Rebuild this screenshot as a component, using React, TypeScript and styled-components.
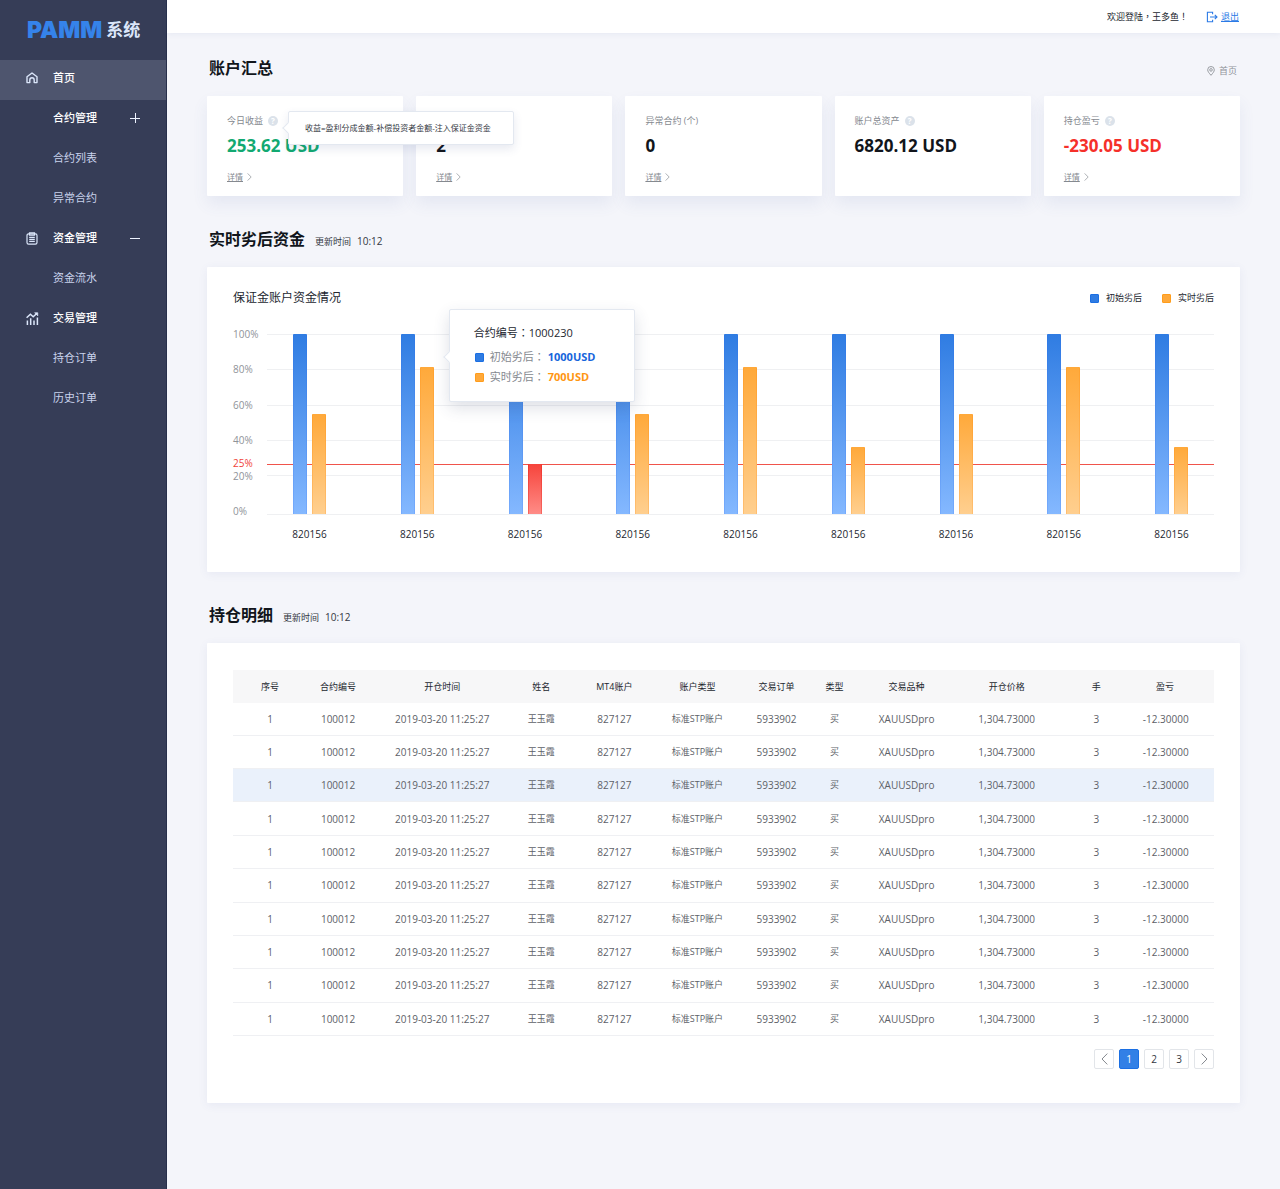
import React from "react";
import styled, { createGlobalStyle, css } from "styled-components";

const GlobalStyle = createGlobalStyle`
  *, *::before, *::after { box-sizing: border-box; }
  body {
    margin: 0;
    background: #f4f5fa;
    color: #23272f;
    font-family: "Open Sans", "Noto Sans", "Noto Sans CJK SC", sans-serif;
    font-size: 9px;
    line-height: 14px;
  }
  h1, h2, h3, p, ul, dl, dd, dt { margin: 0; padding: 0; }
  ul { list-style: none; }
  button { font: inherit; color: inherit; border: 0; background: none; padding: 0; cursor: pointer; }
  svg { display: block; flex: none; }
`;

/* ---------- shell ---------- */

const Shell = styled.div`
  display: grid;
  grid-template-columns: 167px minmax(0, 1fr);
  min-height: 100vh;
`;

const Sidebar = styled.aside`
  background: #363d57;
  border-right: 1px solid #272f4b;
`;

const Logo = styled.div`
  display: flex;
  align-items: center;
  gap: 4px;
  height: 60px;
  padding-left: 27px;
  color: #dbe6fa;
  font-size: 17px;
  font-weight: 700;
  line-height: 24px;
`;

const LogoMark = styled.span`
  color: #3583ea;
  font-family: Inter, "Liberation Sans", sans-serif;
  font-size: 23px;
  font-weight: 900;
`;

const menuRow = css`
  display: grid;
  grid-template-columns: 27px 1fr auto;
  align-items: center;
  width: 100%;
  height: 40px;
  padding: 0 26px 4px;
  font-size: 11px;
  line-height: 16px;
  text-align: left;
  text-decoration: none;
`;

const MenuLink = styled.a<{ $active?: boolean; $child?: boolean }>`
  ${menuRow}
  color: ${(p) => (p.$child ? "#c9d3ec" : "#ffffff")};
  font-weight: ${(p) => (p.$child ? 400 : 500)};
  background: ${(p) => (p.$active ? "#4e556e" : "transparent")};
`;

const MenuButton = styled.button`
  ${menuRow}
  color: #ffffff;
  font-size: 11px;
  line-height: 16px;
  font-weight: 500;
`;

const MenuText = styled.span`
  grid-column: 2;
`;

const Content = styled.div`
  min-width: 0;
`;

const TopBar = styled.header`
  display: flex;
  justify-content: flex-end;
  align-items: center;
  gap: 18px;
  height: 33px;
  padding: 0 41px;
  background: #ffffff;
  box-shadow: 0 1px 6px rgba(70, 85, 150, 0.08);
`;

const Logout = styled.a`
  display: flex;
  align-items: center;
  gap: 3px;
  color: #2b7ae6;
  text-underline-offset: 1px;
`;

const Main = styled.main`
  display: flex;
  flex-direction: column;
  gap: 31px;
  padding: 23px 40px 60px;
`;

const TitleRow = styled.div`
  display: flex;
  align-items: baseline;
  gap: 10px;
  padding: 0 3px 0 2px;
  margin-bottom: 16px;
`;

const Title = styled.h2`
  color: #11151b;
  font-size: 16px;
  font-weight: 700;
  line-height: 24px;
`;

const Crumb = styled.a`
  display: flex;
  align-items: center;
  align-self: flex-end;
  gap: 4px;
  margin-left: auto;
  color: #8f9399;
  line-height: 18px;
  text-decoration: none;
`;

const Updated = styled.p`
  display: flex;
  align-items: baseline;
  gap: 6px;
  color: #33373f;
`;

const Latin = styled.span`
  font-size: 10px;
`;

/* full-width punctuation centred in its cell */
const Punct = styled.span`
  font-family: "Noto Sans CJK TC", sans-serif;
  line-height: 1;
`;

/* ---------- summary cards ---------- */

const Stats = styled.div`
  display: grid;
  grid-template-columns: repeat(5, minmax(0, 1fr));
  gap: 13px;
`;

const StatCard = styled.article`
  padding: 18px 20px 12px;
  background: #ffffff;
  border-radius: 1px;
  box-shadow: 0 8px 16px rgba(80, 95, 170, 0.09);
`;

const StatLabel = styled.div`
  display: flex;
  align-items: center;
  gap: 5px;
  min-height: 14px;
  color: #85898f;
`;

const Help = styled.div`
  position: relative;
  display: flex;
`;

const HelpButton = styled.button`
  width: 10px;
  height: 10px;
  border-radius: 50%;
  background: #dbe2ea;
  color: #ffffff;
  font-size: 8px;
  font-weight: 700;
  line-height: 10px;
  text-align: center;
`;

const StatValue = styled.p<{ $color?: string }>`
  margin: 6px 0 12px;
  color: ${(p) => p.$color ?? "#11151b"};
  font-size: 17px;
  font-weight: 700;
  line-height: 24px;
`;

const Detail = styled.a`
  display: inline-flex;
  align-items: center;
  gap: 4px;
  color: #85898f;
  font-size: 8px;
  text-underline-offset: 1px;
`;

const bubble = css`
  position: absolute;
  z-index: 2;
  background: #ffffff;
  border: 1px solid #e3e8f0;
  border-radius: 2px;
  white-space: nowrap;

  &::before {
    content: "";
    position: absolute;
    left: -5px;
    width: 8px;
    height: 8px;
    background: #ffffff;
    border: solid #e3e8f0;
    border-width: 0 0 1px 1px;
    transform: rotate(45deg);
  }
`;

const HelpBubble = styled.div`
  ${bubble}
  left: 20px;
  top: -5px;
  padding: 9px 22px 9px 16px;
  color: #33373f;
  font-size: 8px;
  box-shadow: 0 4px 10px rgba(60, 75, 130, 0.12);

  &::before { top: 12px; }
`;

/* ---------- chart ---------- */

const Panel = styled.div`
  padding: 23px 26px 31px;
  background: #ffffff;
  border-radius: 1px;
  box-shadow: 0 2px 10px rgba(80, 95, 170, 0.08);
`;

const ChartHead = styled.div`
  display: flex;
  justify-content: space-between;
  align-items: center;
  margin-bottom: 28px;
`;

const ChartTitle = styled.h3`
  font-size: 12px;
  font-weight: 400;
  line-height: 16px;
`;

const Legend = styled.ul`
  display: flex;
  gap: 20px;
`;

const LegendItem = styled.li`
  display: flex;
  align-items: center;
  gap: 7px;
`;

type Tone = "blue" | "orange" | "red";

const tones: Record<Tone, { top: string; bottom: string; edge: string; side: string }> = {
  blue: { top: "#2f7ce2", bottom: "#84b8ff", edge: "#1b6fe3", side: "rgba(40, 100, 240, 0.15)" },
  orange: { top: "#ffa93a", bottom: "#ffcf8f", edge: "#ff9d1c", side: "rgba(255, 130, 0, 0.2)" },
  red: { top: "#f6443c", bottom: "#ff8c87", edge: "#f0352c", side: "rgba(230, 20, 10, 0.3)" },
};

const Swatch = styled.span<{ $tone: Tone }>`
  width: 9px;
  height: 9px;
  border: 1px solid ${(p) => tones[p.$tone].edge};
  border-radius: 1px;
  background: ${(p) => tones[p.$tone].top};
`;

const Chart = styled.div`
  display: grid;
  grid-template-columns: 34px minmax(0, 1fr);
  grid-template-rows: 181px auto;
  row-gap: 12px;
`;

const YAxis = styled.div`
  position: relative;
  display: flex;
  flex-direction: column;
  justify-content: space-between;
  margin: -6px 0 -2px;
  color: #8f9399;
  font-size: 10px;
  line-height: 12px;
`;

const LimitLabel = styled.span`
  position: absolute;
  left: 0;
  bottom: 48px;
  color: #f0423a;
`;

const Plot = styled.div`
  display: grid;
  grid-template-rows: 100%;
`;

const GridLines = styled.div`
  position: relative;
  grid-area: 1 / 1;
  display: grid;
  grid-template-rows: 35fr 36fr 35fr 35fr 39fr 1px;

  i { border-top: 1px solid #eff0f2; }
`;

const LimitLine = styled.hr`
  position: absolute;
  left: 0;
  right: 0;
  bottom: 50px;
  margin: 0;
  border: 0;
  border-top: 1px solid #f0534b;
`;

const Groups = styled.div`
  grid-area: 1 / 1;
  display: flex;
  justify-content: space-between;
  padding: 0 26px 1px;
`;

const Group = styled.div`
  position: relative;
  display: flex;
  align-items: flex-end;
  justify-content: space-between;
  width: 33px;
`;

const Bar = styled.div<{ $tone: Tone }>`
  width: 14px;
  border-radius: 1px 1px 0 0;
  background: linear-gradient(${(p) => tones[p.$tone].top}, ${(p) => tones[p.$tone].bottom});
  box-shadow: inset 1px 0 ${(p) => tones[p.$tone].side}, inset -1px 0 ${(p) => tones[p.$tone].side};
`;

const XAxis = styled.div`
  grid-column: 2;
  display: flex;
  justify-content: space-between;
  padding: 0 26px;
  font-size: 10px;

  span {
    display: flex;
    justify-content: center;
    width: 33px;
  }
`;

const BarBubble = styled.div`
  ${bubble}
  left: 48px;
  top: -25px;
  padding: 15px 39px 16px 24px;
  font-size: 11px;
  line-height: 16px;
  box-shadow: 0 6px 16px rgba(50, 60, 100, 0.16);

  &::before { top: 43px; }
`;

const BubbleRow = styled.div`
  display: flex;
  align-items: center;
  gap: 3px;
  margin-top: 4px;
  padding-left: 1px;
  color: #85898f;
`;

const BubbleHead = styled.p`
  margin-bottom: 8px;
`;

const BubbleLabel = styled.span`
  display: flex;
  align-items: center;
  gap: 6px;
`;

const BubbleValue = styled.strong<{ $color: string }>`
  color: ${(p) => p.$color};
  font-weight: 700;
`;

/* ---------- table ---------- */

const TablePanel = styled(Panel)`
  padding: 27px 26px 34px;
`;

const Table = styled.table`
  width: 100%;
  height: 366px;
  table-layout: fixed;
  border-collapse: collapse;
  text-align: center;
  white-space: nowrap;

  th, td { padding: 0; }
  th:last-child, td:last-child { padding-right: 27px; }
`;

const Col = styled.col<{ $w: number }>`
  width: ${(p) => p.$w}px;
`;

const HeadCell = styled.th`
  height: 33px;
  background: #f7f7f8;
  font-weight: 400;
`;

const Row = styled.tr<{ $selected: boolean }>`
  background: ${(p) => (p.$selected ? "#eaf1fb" : "transparent")};
`;

const Cell = styled.td<{ $latin: boolean }>`
  border-bottom: 1px solid #eff0f3;
  color: #5d6168;
  font-size: ${(p) => (p.$latin ? 10 : 9)}px;
`;

const Pager = styled.nav`
  display: flex;
  justify-content: flex-end;
  gap: 5px;
  margin-top: 13px;
`;

const PageButton = styled.button<{ $current?: boolean }>`
  display: flex;
  align-items: center;
  justify-content: center;
  width: 20px;
  height: 20px;
  border: 1px solid ${(p) => (p.$current ? "#1b6fe3" : "#e2e5e9")};
  border-radius: 2px;
  background: ${(p) => (p.$current ? "#3280e6" : "#ffffff")};
  color: ${(p) => (p.$current ? "#ffffff" : "#33373f")};
  font-size: 10px;
`;

/* ---------- icons ---------- */

const HomeIcon = () => (
  <svg width="12" height="12" viewBox="0 0 12 12" fill="none" stroke="#dbe6fa" strokeWidth="1.4">
    <path d="M1 4.8 6 1l5 3.8v5.8H8.2V8a2.2 2.2 0 0 0-4.4 0v2.6H1z" strokeLinejoin="round" />
  </svg>
);

const ClipboardIcon = () => (
  <svg width="12" height="13" viewBox="0 0 12 13" fill="none" stroke="#dbe6fa" strokeWidth="1.2">
    <rect x="1" y="1.8" width="10" height="10.4" rx="1.6" />
    <path d="M3.5 1.8V.8h5v2.4h-5zM3.2 5.3h5.6M3.2 7.3h5.6M3.2 9.4h5.6" />
  </svg>
);

const TradeIcon = () => (
  <svg width="13" height="13" viewBox="0 0 13 13" fill="none" stroke="#dbe6fa" strokeWidth="1.5">
    <path d="M.6 5.8 4.4 2.2l2.8 2.6L11 1.2" />
    <path d="M8.6.7h3.2v3.2z" fill="#dbe6fa" strokeWidth=".6" />
    <path d="M1.4 8.4V13M4.7 6.2V13M8 8.4V13M11.4 5.6V13" />
  </svg>
);

const ToggleIcon = ({ open }: { open: boolean }) => (
  <svg width="10" height="10" viewBox="0 0 10 10" stroke="#eef3ff">
    <path d={open ? "M0 5.5h10" : "M0 5.5h10M5.5 0v10"} />
  </svg>
);

const LogoutIcon = () => (
  <svg width="12" height="12" viewBox="0 0 12 12" fill="none" stroke="#2b7ae6" strokeWidth="1.1">
    <path d="M6.6 3.2V1.3H1.4v9.4h5.2V8.8M4 6h7M8.8 3.8 11 6 8.8 8.2" />
  </svg>
);

const PinIcon = () => (
  <svg width="8" height="10" viewBox="0 0 8 10" fill="none" stroke="#8f9399" strokeWidth=".9">
    <path d="M4 9.3 C2 7 0.7 5.5 0.7 3.8 a3.3 3.3 0 0 1 6.6 0 C7.3 5.5 6 7 4 9.3z" />
    <circle cx="4" cy="3.9" r="1.3" />
  </svg>
);

const Chevron = ({ back, height }: { back?: boolean; height: number }) => (
  <svg width={height / 2 + 1} height={height} viewBox="0 0 7 12" fill="none" stroke="#85898f">
    <path d={back ? "M6.3 0.6 1 6l5.3 5.4" : "M0.7 0.6 6 6l-5.3 5.4"} />
  </svg>
);

/* ---------- data ---------- */

type MenuItem = { text: string; icon?: React.ReactNode; open?: boolean; children?: string[] };

const menu: MenuItem[] = [
  { text: "合约管理", open: false, children: ["合约列表", "异常合约"] },
  { text: "资金管理", icon: <ClipboardIcon />, open: true, children: ["资金流水"] },
  { text: "交易管理", icon: <TradeIcon />, children: ["持仓订单", "历史订单"] },
];

type Stat = { label?: string; value: string; color?: string; help?: boolean; tip?: string; detail?: boolean };

const stats: Stat[] = [
  { label: "今日收益", value: "253.62 USD", color: "#12a971", help: true, tip: "收益=盈利分成金额-补偿投资者金额-注入保证金资金", detail: true },
  { value: "2", detail: true },
  { label: "异常合约 (个)", value: "0", detail: true },
  { label: "账户总资产", value: "6820.12 USD", help: true },
  { label: "持仓盈亏", value: "-230.05 USD", color: "#f5302a", help: true, detail: true },
];

const ticks = ["100%", "80%", "60%", "40%", "20%", "0%"];

const groups: { id: string; live: number; tone: Tone }[] = [
  { id: "820156", live: 55.6, tone: "orange" },
  { id: "820156", live: 81.6, tone: "orange" },
  { id: "820156", live: 27.8, tone: "red" },
  { id: "820156", live: 55.6, tone: "orange" },
  { id: "820156", live: 81.6, tone: "orange" },
  { id: "820156", live: 37.2, tone: "orange" },
  { id: "820156", live: 55.6, tone: "orange" },
  { id: "820156", live: 81.6, tone: "orange" },
  { id: "820156", live: 37.2, tone: "orange" },
];

const columns = [
  { name: "序号", width: 74, value: "1" },
  { name: "合约编号", width: 62, value: "100012" },
  { name: "开仓时间", width: 146, value: "2019-03-20 11:25:27" },
  { name: "姓名", width: 52, value: "王玉霞" },
  { name: "MT4账户", width: 94, value: "827127" },
  { name: "账户类型", width: 72, value: "标准STP账户" },
  { name: "交易订单", width: 86, value: "5933902" },
  { name: "类型", width: 30, value: "买" },
  { name: "交易品种", width: 114, value: "XAUUSDpro" },
  { name: "开仓价格", width: 86, value: "1,304.73000" },
  { name: "手", width: 93, value: "3" },
  { name: "盈亏", width: 71, value: "-12.30000" },
];

const isLatin = (text: string) => /^[\x20-\x7e]+$/.test(text);
const selectedRow = 2;

/* ---------- page ---------- */

export default function App() {
  return (
    <>
      <GlobalStyle />
      <Shell>
        <Sidebar>
          <Logo>
            <LogoMark>PAMM</LogoMark>系统
          </Logo>
          <nav>
            <MenuLink href="#home" $active>
              <HomeIcon />
              <MenuText>首页</MenuText>
            </MenuLink>
            {menu.map((item) => (
              <React.Fragment key={item.text}>
                <MenuButton type="button">
                  {item.icon}
                  <MenuText>{item.text}</MenuText>
                  {item.open !== undefined && <ToggleIcon open={item.open} />}
                </MenuButton>
                <ul>
                  {item.children?.map((child) => (
                    <li key={child}>
                      <MenuLink href="#page" $child>
                        <MenuText>{child}</MenuText>
                      </MenuLink>
                    </li>
                  ))}
                </ul>
              </React.Fragment>
            ))}
          </nav>
        </Sidebar>

        <Content>
          <TopBar>
            <span>欢迎登陆<Punct>，</Punct>王多鱼<Punct>！</Punct></span>
            <Logout href="#logout">
              <LogoutIcon />
              退出
            </Logout>
          </TopBar>

          <Main>
            <section>
              <TitleRow>
                <Title>账户汇总</Title>
                <Crumb href="#home">
                  <PinIcon />
                  首页
                </Crumb>
              </TitleRow>
              <Stats>
                {stats.map((s) => (
                  <StatCard key={s.value}>
                    <StatLabel>
                      {s.label}
                      {s.help && (
                        <Help>
                          <HelpButton type="button">?</HelpButton>
                          {s.tip && <HelpBubble role="tooltip">{s.tip}</HelpBubble>}
                        </Help>
                      )}
                    </StatLabel>
                    <StatValue $color={s.color}>{s.value}</StatValue>
                    {s.detail && (
                      <Detail href="#detail">
                        详情
                        <Chevron height={8} />
                      </Detail>
                    )}
                  </StatCard>
                ))}
              </Stats>
            </section>

            <section>
              <TitleRow>
                <Title>实时劣后资金</Title>
                <Updated>
                  更新时间 <Latin>10:12</Latin>
                </Updated>
              </TitleRow>
              <Panel>
                <ChartHead>
                  <ChartTitle>保证金账户资金情况</ChartTitle>
                  <Legend>
                    <LegendItem><Swatch $tone="blue" />初始劣后</LegendItem>
                    <LegendItem><Swatch $tone="orange" />实时劣后</LegendItem>
                  </Legend>
                </ChartHead>
                <Chart>
                  <YAxis>
                    {ticks.map((t) => <span key={t}>{t}</span>)}
                    <LimitLabel>25%</LimitLabel>
                  </YAxis>
                  <Plot>
                    <GridLines>
                      {ticks.map((t) => <i key={t} />)}
                      <LimitLine />
                    </GridLines>
                    <Groups>
                      {groups.map((g, i) => (
                        <Group key={i}>
                          <Bar $tone="blue" style={{ height: "100%" }} />
                          <Bar $tone={g.tone} style={{ height: `${g.live}%` }} />
                          {i === 1 && (
                            <BarBubble role="tooltip">
                              <BubbleHead>合约编号<Punct>：</Punct>1000230</BubbleHead>
                              <BubbleRow>
                                <BubbleLabel>
                                  <Swatch $tone="blue" />
                                  <span>初始劣后<Punct>：</Punct></span>
                                </BubbleLabel>
                                <BubbleValue $color="#1765dc">1000USD</BubbleValue>
                              </BubbleRow>
                              <BubbleRow>
                                <BubbleLabel>
                                  <Swatch $tone="orange" />
                                  <span>实时劣后<Punct>：</Punct></span>
                                </BubbleLabel>
                                <BubbleValue $color="#ff9612">700USD</BubbleValue>
                              </BubbleRow>
                            </BarBubble>
                          )}
                        </Group>
                      ))}
                    </Groups>
                  </Plot>
                  <XAxis>
                    {groups.map((g, i) => <span key={i}>{g.id}</span>)}
                  </XAxis>
                </Chart>
              </Panel>
            </section>

            <section>
              <TitleRow>
                <Title>持仓明细</Title>
                <Updated>
                  更新时间 <Latin>10:12</Latin>
                </Updated>
              </TitleRow>
              <TablePanel>
                <Table>
                  <colgroup>
                    {columns.map((c) => <Col key={c.name} $w={c.width} />)}
                  </colgroup>
                  <thead>
                    <tr>
                      {columns.map((c) => <HeadCell key={c.name} scope="col">{c.name}</HeadCell>)}
                    </tr>
                  </thead>
                  <tbody>
                    {Array.from({ length: 10 }, (_, r) => (
                      <Row key={r} $selected={r === selectedRow}>
                        {columns.map((c) => (
                          <Cell key={c.name} $latin={isLatin(c.value)}>{c.value}</Cell>
                        ))}
                      </Row>
                    ))}
                  </tbody>
                </Table>
                <Pager aria-label="分页">
                  <PageButton type="button" aria-label="上一页"><Chevron back height={12} /></PageButton>
                  <PageButton type="button" $current>1</PageButton>
                  <PageButton type="button">2</PageButton>
                  <PageButton type="button">3</PageButton>
                  <PageButton type="button" aria-label="下一页"><Chevron height={12} /></PageButton>
                </Pager>
              </TablePanel>
            </section>
          </Main>
        </Content>
      </Shell>
    </>
  );
}
